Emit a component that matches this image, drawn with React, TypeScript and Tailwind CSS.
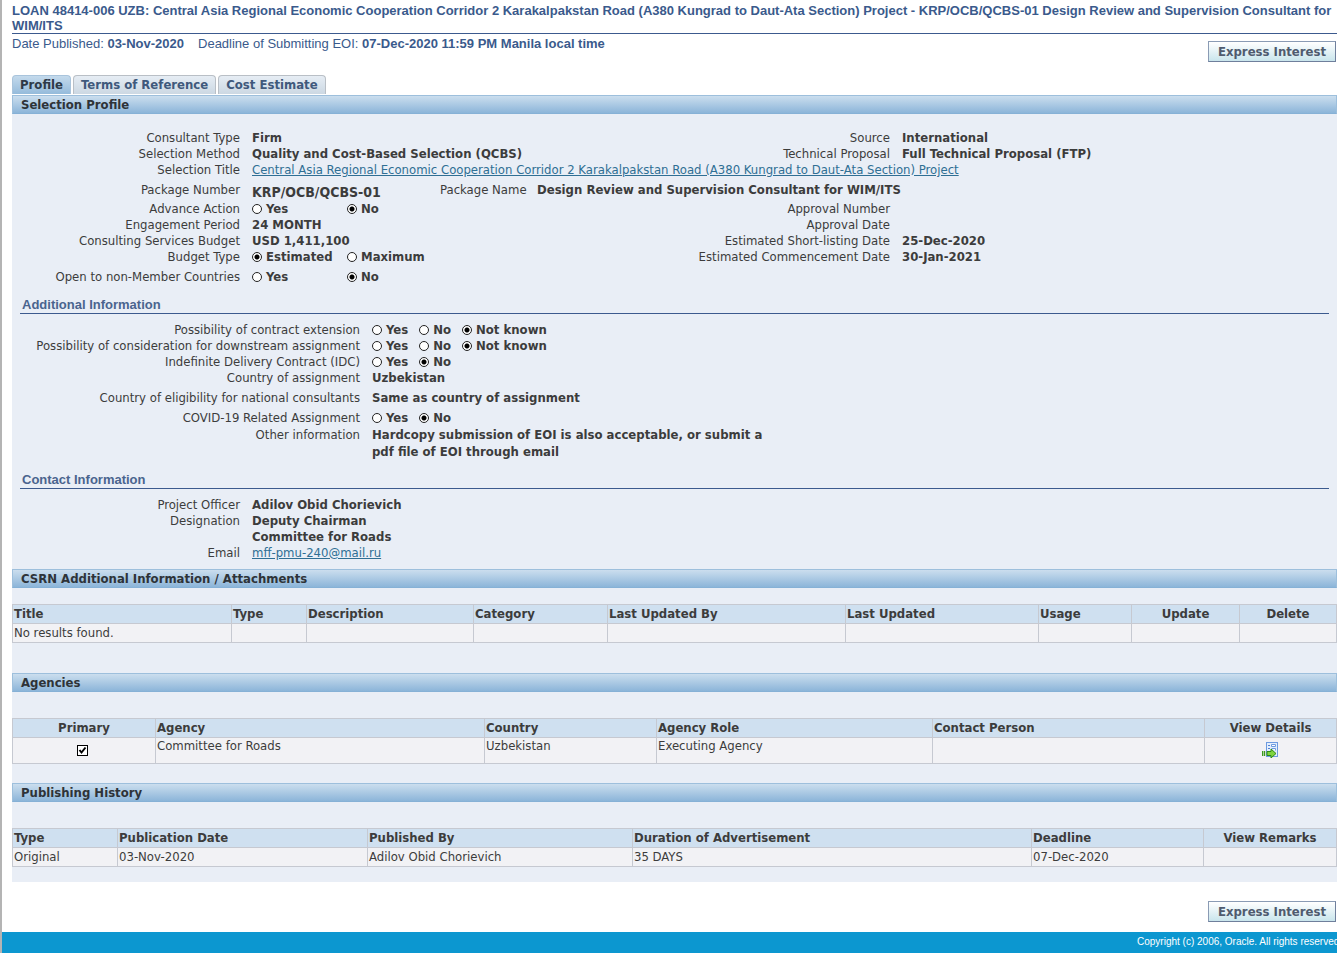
import { useState } from 'react';
import type { ReactNode } from 'react';

const tabs = ['Profile', 'Terms of Reference', 'Cost Estimate'];

const PROJECT_TITLE =
    'Central Asia Regional Economic Cooperation Corridor 2 Karakalpakstan Road (A380 Kungrad to Daut-Ata Section) Project';

type Column = { label: string; width: string; center?: boolean };

const attachmentColumns: Column[] = [
    { label: 'Title', width: 'w-[219px]' },
    { label: 'Type', width: 'w-[75px]' },
    { label: 'Description', width: 'w-[167px]' },
    { label: 'Category', width: 'w-[134px]' },
    { label: 'Last Updated By', width: 'w-[238px]' },
    { label: 'Last Updated', width: 'w-[193px]' },
    { label: 'Usage', width: 'w-[93px]' },
    { label: 'Update', width: 'w-[108px]', center: true },
    { label: 'Delete', width: 'w-[97px]', center: true },
];

const agencyColumns: Column[] = [
    { label: 'Primary', width: 'w-[143px]', center: true },
    { label: 'Agency', width: 'w-[329px]' },
    { label: 'Country', width: 'w-[172px]' },
    { label: 'Agency Role', width: 'w-[276px]' },
    { label: 'Contact Person', width: 'w-[272px]' },
    { label: 'View Details', width: 'w-[132px]', center: true },
];

const historyColumns: Column[] = [
    { label: 'Type', width: 'w-[105px]' },
    { label: 'Publication Date', width: 'w-[250px]' },
    { label: 'Published By', width: 'w-[265px]' },
    { label: 'Duration of Advertisement', width: 'w-[399px]' },
    { label: 'Deadline', width: 'w-[172px]' },
    { label: 'View Remarks', width: 'w-[133px]', center: true },
];

// --- Shared pieces ---

function ExpressButton() {
    return (
        <button className="mr-px h-[21px] w-[128px] border border-[#8a9bb4] border-r-[#6f7f9c] border-b-[#6f7f9c] bg-linear-to-b from-white to-[#c9e5ec] text-[13px] leading-[18px] font-bold text-[#4f5b6e]">
            Express Interest
        </button>
    );
}

function SectionBar({ children }: { children: ReactNode }) {
    return (
        <h2 className="h-[19px] border border-[#9dbfdc] border-b-[#86b1d6] bg-linear-to-b from-[#cbdeee] to-[#8cb5d9] pl-2 text-[13px] leading-[18px] font-bold text-[#2e3338]">
            {children}
        </h2>
    );
}

function SubHeading({ children }: { children: ReactNode }) {
    return (
        <h3 className="mx-2 h-[17px] border-b border-[#3c5a8e] pl-0.5 font-['Liberation_Sans',sans-serif] text-[13px] leading-4 font-bold text-[#4a648e]">
            {children}
        </h3>
    );
}

function Radios({ name, options, value, wide }: { name: string; options: string[]; value: string; wide?: boolean }) {
    return (
        <div role="radiogroup" aria-label={name} className={`flex ${wide ? '' : 'gap-[11px]'}`}>
            {options.map((option) => (
                <label key={option} className={`flex items-center gap-1 whitespace-nowrap ${wide ? 'w-[95px]' : ''}`}>
                    <input
                        type="radio"
                        name={name}
                        defaultChecked={option === value}
                        className="size-[10px] shrink-0 appearance-none rounded-full border border-[#222] bg-white checked:bg-[radial-gradient(circle,#000_2px,#fff_3px)]"
                    />
                    {option}
                </label>
            ))}
        </div>
    );
}

function Label({ children }: { children: ReactNode }) {
    return <dt className="text-right whitespace-nowrap">{children}</dt>;
}

function Value({ children }: { children?: ReactNode }) {
    return <dd className="font-bold whitespace-nowrap">{children}</dd>;
}

function DataTable({ columns, children }: { columns: Column[]; children: ReactNode }) {
    return (
        <table className="w-full table-fixed border-collapse text-[13px] leading-4 [&_td]:border [&_td]:border-[#c6c9d1] [&_td]:px-px [&_th]:border [&_th]:border-[#c6c9d1] [&_th]:px-px">
            <thead>
                <tr className="h-[19px] bg-[#cfe0f0]">
                    {columns.map((col) => (
                        <th key={col.label} className={`${col.width} ${col.center ? 'text-center' : 'text-left'}`}>
                            {col.label}
                        </th>
                    ))}
                </tr>
            </thead>
            <tbody className="bg-[#f2f2f5]">{children}</tbody>
        </table>
    );
}

function DetailsIcon() {
    return (
        <svg width="16" height="16" viewBox="0 0 16 16">
            <rect x="4.5" y="0.5" width="11" height="14" fill="#e4eefc" stroke="#6d9be0" />
            <path d="M6 3.500h2M6 6.500h2" stroke="#4f83d6" />
            <path d="M9.500 2.500h4v2h-4zM9.500 6.500h4v2" fill="#fff" stroke="#6d9be0" />
            <path d="M0.500 9v5M2.500 9v5" stroke="#3c9a1c" strokeWidth="1.4" />
            <path d="M5 9.500h4v-2.500l5 4.500-5 4.500v-2.500h-4z" fill="#7fd43f" stroke="#2f8a17" />
        </svg>
    );
}

// --- Sections ---

const rowGrid = 'grid grid-cols-[228px_minmax(0,414fr)_212px_minmax(0,435fr)] gap-x-3';

function SelectionProfile() {
    return (
        <dl className="flex flex-col pt-4 leading-4">
            <div className={rowGrid}>
                <Label>Consultant Type</Label>
                <Value>Firm</Value>
                <Label>Source</Label>
                <Value>International</Value>
            </div>
            <div className={rowGrid}>
                <Label>Selection Method</Label>
                <Value>Quality and Cost-Based Selection (QCBS)</Value>
                <Label>Technical Proposal</Label>
                <Value>Full Technical Proposal (FTP)</Value>
            </div>
            <div className={rowGrid}>
                <Label>Selection Title</Label>
                <dd className="whitespace-nowrap">
                    <a href="#" className="text-[#2f6f94] underline">{PROJECT_TITLE}</a>
                </dd>
            </div>
            <div className="grid h-[23px] grid-cols-[228px_176px_85px_minmax(0,1fr)] items-center gap-x-3">
                <Label>Package Number</Label>
                <dd className="pt-1 text-sm leading-4 font-bold whitespace-nowrap">KRP/OCB/QCBS-01</dd>
                <Label>Package Name</Label>
                <Value>Design Review and Supervision Consultant for WIM/ITS</Value>
            </div>
            <div className={rowGrid}>
                <Label>Advance Action</Label>
                <Value><Radios name="Advance Action" options={['Yes', 'No']} value="No" wide /></Value>
                <Label>Approval Number</Label>
                <Value />
            </div>
            <div className={rowGrid}>
                <Label>Engagement Period</Label>
                <Value>24 MONTH</Value>
                <Label>Approval Date</Label>
                <Value />
            </div>
            <div className={rowGrid}>
                <Label>Consulting Services Budget</Label>
                <Value>USD 1,411,100</Value>
                <Label>Estimated Short-listing Date</Label>
                <Value>25-Dec-2020</Value>
            </div>
            <div className={rowGrid}>
                <Label>Budget Type</Label>
                <Value><Radios name="Budget Type" options={['Estimated', 'Maximum']} value="Estimated" wide /></Value>
                <Label>Estimated Commencement Date</Label>
                <Value>30-Jan-2021</Value>
            </div>
            <div className={`${rowGrid} pt-1`}>
                <Label>Open to non-Member Countries</Label>
                <Value><Radios name="Open to non-Member Countries" options={['Yes', 'No']} value="No" wide /></Value>
            </div>
        </dl>
    );
}

function AdditionalInformation() {
    return (
        <dl className="grid grid-cols-[348px_minmax(0,1fr)] gap-x-3 pt-2 leading-4">
            <Label>Possibility of contract extension</Label>
            <Value><Radios name="Possibility of contract extension" options={['Yes', 'No', 'Not known']} value="Not known" /></Value>
            <Label>Possibility of consideration for downstream assignment</Label>
            <Value><Radios name="Possibility of consideration for downstream assignment" options={['Yes', 'No', 'Not known']} value="Not known" /></Value>
            <Label>Indefinite Delivery Contract (IDC)</Label>
            <Value><Radios name="Indefinite Delivery Contract" options={['Yes', 'No']} value="No" /></Value>
            <Label>Country of assignment</Label>
            <Value>Uzbekistan</Value>
            <dt className="py-1 text-right">Country of eligibility for national consultants</dt>
            <dd className="py-1 font-bold">Same as country of assignment</dd>
            <Label>COVID-19 Related Assignment</Label>
            <Value><Radios name="COVID-19 Related Assignment" options={['Yes', 'No']} value="No" /></Value>
            <dt className="text-right leading-[17px]">Other information</dt>
            <dd className="leading-[17px] font-bold">
                Hardcopy submission of EOI is also acceptable, or submit a
                <br />
                pdf file of EOI through email
            </dd>
        </dl>
    );
}

function ContactInformation() {
    return (
        <dl className="grid grid-cols-[228px_minmax(0,1fr)] gap-x-3 py-2 leading-4">
            <Label>Project Officer</Label>
            <Value>Adilov Obid Chorievich</Value>
            <Label>Designation</Label>
            <Value>
                Deputy Chairman
                <br />
                Committee for Roads
            </Value>
            <Label>Email</Label>
            <dd><a href="mailto:mff-pmu-240@mail.ru" className="text-[#2f6f94] underline">mff-pmu-240@mail.ru</a></dd>
        </dl>
    );
}

export default function App() {
    const [activeTab, setActiveTab] = useState('Profile');

    return (
        <div className="flex min-h-screen flex-col overflow-hidden border-l-2 border-[#b4b4b4] bg-white font-['DejaVu_Sans_Condensed','DejaVu_Sans',sans-serif] text-[13px] text-[#3c3c3c]">
            <div className="pl-[10px]">
                <header className="font-['Liberation_Sans',sans-serif] text-[#3a5a8c]">
                    <h1 className="border-b border-[#3c5a8e] pt-[3px] text-[13px] leading-[15px] font-bold">
                        {`LOAN 48414-006 UZB: ${PROJECT_TITLE} - KRP/OCB/QCBS-01 Design Review and Supervision Consultant for WIM/ITS`}
                    </h1>
                    <p className="flex gap-[14px] pt-0.5 leading-4">
                        <span>Date Published: <b>03-Nov-2020</b></span>
                        <span>Deadline of Submitting EOI: <b>07-Dec-2020 11:59 PM Manila local time</b></span>
                    </p>
                </header>

                <div className="-mt-[11px] flex justify-end">
                    <ExpressButton />
                </div>

                <nav aria-label="Tabs" className="mt-[13px] mb-px flex gap-0.5">
                    {tabs.map((tab) => (
                        <button
                            key={tab}
                            onClick={() => setActiveTab(tab)}
                            className={`h-[19px] rounded-t-[4px] border border-b-0 px-[7px] leading-[18px] font-bold ${
                                activeTab === tab
                                    ? 'border-[#a9c4dc] bg-linear-to-b from-[#c4daec] to-[#95bbdb] text-[#2e3a48]'
                                    : 'border-[#b9bfc6] bg-linear-to-b from-[#e6edf4] to-[#ccd8e3] text-[#40597c]'
                            }`}
                        >
                            {tab}
                        </button>
                    ))}
                </nav>

                <main className="bg-[#e9eef6] pb-[15px]">
                    <SectionBar>Selection Profile</SectionBar>
                    <SelectionProfile />
                    <div className="pt-3">
                        <SubHeading>Additional Information</SubHeading>
                        <AdditionalInformation />
                    </div>
                    <div className="pt-3">
                        <SubHeading>Contact Information</SubHeading>
                        <ContactInformation />
                    </div>

                    <SectionBar>CSRN Additional Information / Attachments</SectionBar>
                    <div className="pt-4 pb-[30px]">
                        <DataTable columns={attachmentColumns}>
                            <tr className="h-[19px]">
                                <td>No results found.</td>
                                {attachmentColumns.slice(1).map((col) => <td key={col.label} />)}
                            </tr>
                        </DataTable>
                    </div>

                    <SectionBar>Agencies</SectionBar>
                    <div className="pt-[26px] pb-[19px]">
                        <DataTable columns={agencyColumns}>
                            <tr className="h-[26px] align-top">
                                <td>
                                    <div className="grid justify-center pt-[7px] pr-[3px]">
                                        <input
                                            type="checkbox"
                                            aria-label="Primary"
                                            defaultChecked
                                            className="peer col-start-1 row-start-1 size-[11px] appearance-none border border-black bg-white"
                                        />
                                        <svg className="pointer-events-none invisible col-start-1 row-start-1 peer-checked:visible" width="11" height="11" viewBox="0 0 11 11">
                                            <path d="M2.500 5l2 2.500 4-5" fill="none" stroke="#000" strokeWidth="2" />
                                        </svg>
                                    </div>
                                </td>
                                <td>Committee for Roads</td>
                                <td>Uzbekistan</td>
                                <td>Executing Agency</td>
                                <td />
                                <td>
                                    <div className="flex justify-center pt-1 pr-px">
                                        <button aria-label="View Details"><DetailsIcon /></button>
                                    </div>
                                </td>
                            </tr>
                        </DataTable>
                    </div>

                    <SectionBar>Publishing History</SectionBar>
                    <div className="pt-[26px]">
                        <DataTable columns={historyColumns}>
                            <tr className="h-[19px]">
                                <td>Original</td>
                                <td>03-Nov-2020</td>
                                <td>Adilov Obid Chorievich</td>
                                <td>35 DAYS</td>
                                <td>07-Dec-2020</td>
                                <td />
                            </tr>
                        </DataTable>
                    </div>
                </main>

                <div className="flex justify-end pt-[19px] pb-[10px]">
                    <ExpressButton />
                </div>
            </div>

            <footer className="flex grow justify-end overflow-hidden bg-[#0c97d0]">
                <p className="w-[200px] py-0.5 font-['Liberation_Sans',sans-serif] text-[10px] leading-[15px] whitespace-nowrap text-white">
                    Copyright (c) 2006, Oracle. All rights reserved.
                </p>
            </footer>
        </div>
    );
}
